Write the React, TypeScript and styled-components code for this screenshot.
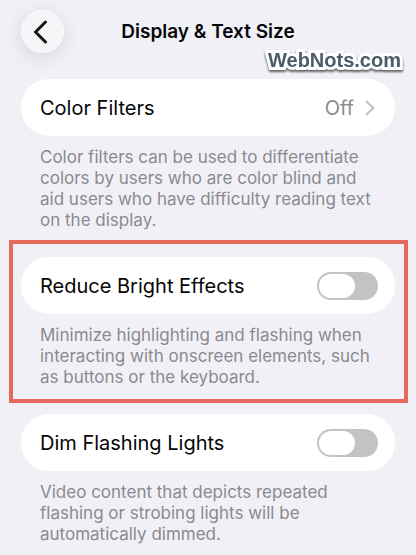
import React, { useState } from 'react';
import styled, { createGlobalStyle } from 'styled-components';

const Global = createGlobalStyle`
  *, *::before, *::after { box-sizing: border-box; }
  body {
    margin: 0;
    background: #f1f0f6;
    color: #060606;
    font-family: Inter, Roboto, sans-serif;
  }
`;

const Page = styled.main`
  padding: 0 21px 10px;
`;

const Header = styled.header`
  display: grid;
  grid-template-columns: 43px 1fr 43px;
  align-items: center;
  padding: 10px 0 26px;
`;

const BackButton = styled.button`
  display: grid;
  place-items: center;
  width: 43px;
  height: 43px;
  padding: 0;
  border: 1px solid #fdfdfe;
  border-radius: 50%;
  background: #f5f5f7;
  color: #161616;
  box-shadow: 0 4px 18px rgba(60, 60, 80, 0.14);
`;

const Title = styled.h1`
  margin: 0;
  font-size: 19px;
  line-height: 24px;
  font-weight: 600;
  text-align: center;
  white-space: nowrap;
`;

const Watermark = styled.span`
  position: absolute;
  top: 48px;
  right: 15px;
  color: #4a5c68;
  font-family: 'Liberation Sans', Arial, sans-serif;
  font-size: 20px;
  line-height: 24px;
  font-weight: 700;
  -webkit-text-stroke: 6px #ffffff;
  paint-order: stroke fill;
  filter: drop-shadow(0 2px 1px rgba(0, 0, 0, 0.6));
`;

const Groups = styled.div`
  display: flex;
  flex-direction: column;
  gap: 26px;
`;

const Group = styled.section<{ $marked?: boolean }>`
  position: relative;

  &::after {
    content: '';
    display: ${(p) => (p.$marked ? 'block' : 'none')};
    position: absolute;
    inset: -17px -13px -15px -12px;
    border: 4px solid #e46a5d;
    pointer-events: none;
  }
`;

const Card = styled.div`
  display: flex;
  align-items: center;
  justify-content: space-between;
  height: 57px;
  padding: 0 17px 0 19px;
  border-radius: 28px;
  background: #ffffff;
`;

const LinkCard = styled(Card).attrs({ as: 'a' })<{ href: string }>`
  padding-right: 20px;
  color: inherit;
  text-decoration: none;
`;

const Label = styled.label`
  font-size: 20px;
  line-height: 26px;
`;

const Value = styled.span`
  display: flex;
  align-items: center;
  gap: 11px;
  color: #8a8a8e;
  font-size: 20px;
  line-height: 26px;
`;

const Switch = styled.input`
  appearance: none;
  display: flex;
  align-items: center;
  width: 61px;
  height: 28px;
  margin: 0;
  padding: 2px;
  border-radius: 14px;
  background: #c3c3c5;

  &::before {
    content: '';
    width: 36px;
    height: 24px;
    border-radius: 12px;
    background: #ffffff;
  }

  &:checked {
    justify-content: flex-end;
    background: #34c759;
  }
`;

const Note = styled.p`
  margin: 0;
  padding: 11px 19px 0;
  color: #8a8a8f;
  font-size: 17px;
  line-height: 21px;
`;

const Line = styled.span`
  display: block;
  white-space: nowrap;
`;

function NoteLines({ lines }: { lines: string[] }) {
  return (
    <Note>
      {lines.map((line) => (
        <Line key={line}>{line} </Line>
      ))}
    </Note>
  );
}

interface ToggleProps {
  id: string;
  label: string;
  lines: string[];
  marked?: boolean;
}

function ToggleGroup({ id, label, lines, marked }: ToggleProps) {
  const [on, setOn] = useState(false);
  return (
    <Group $marked={marked}>
      <Card>
        <Label htmlFor={id}>{label}</Label>
        <Switch id={id} type="checkbox" role="switch" checked={on} onChange={() => setOn(!on)} />
      </Card>
      <NoteLines lines={lines} />
    </Group>
  );
}

export default function App() {
  return (
    <Page>
      <Global />
      <Header>
        <BackButton aria-label="Back">
          <svg width="24" height="24" viewBox="0 0 24 24" fill="none" stroke="currentColor" strokeWidth="3" strokeLinecap="round" strokeLinejoin="round">
            <path d="M14.5 2 4.5 12l10 10" />
          </svg>
        </BackButton>
        <Title>Display &amp; Text Size</Title>
      </Header>
      <Watermark>WebNots.com</Watermark>
      <Groups>
        <Group>
          <LinkCard href="#color-filters">
            <Label as="span">Color Filters</Label>
            <Value>
              Off
              <svg width="10" height="16" viewBox="0 0 10 16" fill="none" stroke="#bfbfc3" strokeWidth="2" strokeLinecap="round" strokeLinejoin="round">
                <path d="M1.5 1.5 8.5 8l-7 6.5" />
              </svg>
            </Value>
          </LinkCard>
          <NoteLines
            lines={[
              'Color filters can be used to differentiate',
              'colors by users who are color blind and',
              'aid users who have difficulty reading text',
              'on the display.',
            ]}
          />
        </Group>
        <ToggleGroup
          id="reduce-bright"
          label="Reduce Bright Effects"
          marked
          lines={[
            'Minimize highlighting and flashing when',
            'interacting with onscreen elements, such',
            'as buttons or the keyboard.',
          ]}
        />
        <ToggleGroup
          id="dim-flashing"
          label="Dim Flashing Lights"
          lines={['Video content that depicts repeated', 'flashing or strobing lights will be', 'automatically dimmed.']}
        />
      </Groups>
    </Page>
  );
}
